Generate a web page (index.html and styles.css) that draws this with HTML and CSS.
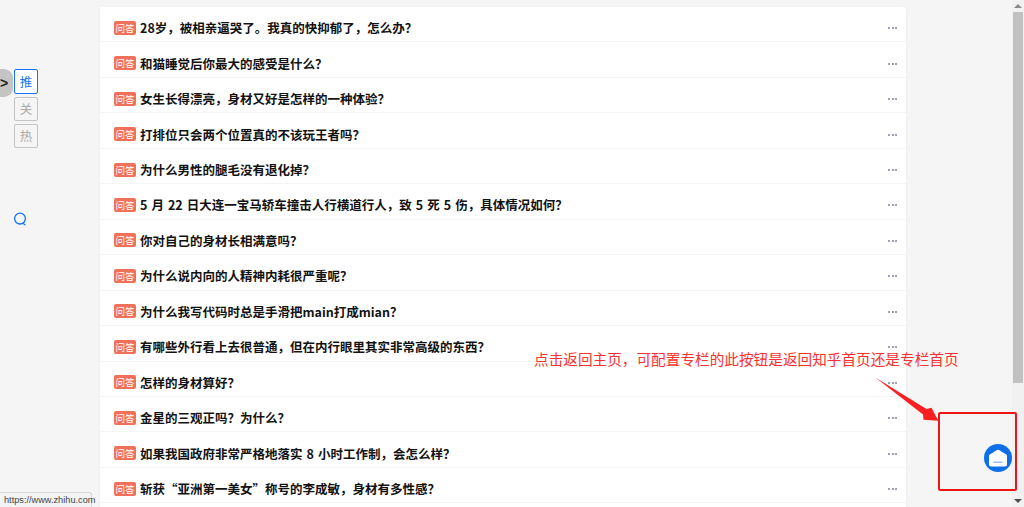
FILE: index.html
```html
<!DOCTYPE html>
<html lang="zh-CN">
<head>
  <meta charset="UTF-8">
  <title>知乎</title>
  <link rel="stylesheet" href="styles.css">
</head>
<body>
  <div class="page">
    <aside class="rail">
      <div class="rail-top">
        <div class="toggle">&gt;</div>
        <div class="tabs">
          <div class="tab active">推</div>
          <div class="tab">关</div>
          <div class="tab">热</div>
        </div>
      </div>
      <svg class="search" width="14" height="14" viewBox="0 0 14 14" fill="none" stroke="#1772f6" stroke-width="1.3">
        <circle cx="7" cy="6.6" r="5.4"/>
        <path d="M9.8 11.2l2.2 1.6" stroke-linecap="round"/>
      </svg>
    </aside>

    <main class="list">
      <div class="row"><span class="tag">问答</span><a class="title">28岁，被相亲逼哭了。我真的快抑郁了，怎么办？</a><span class="more"><i></i><i></i><i></i></span></div>
      <div class="row"><span class="tag">问答</span><a class="title">和猫睡觉后你最大的感受是什么？</a><span class="more"><i></i><i></i><i></i></span></div>
      <div class="row"><span class="tag">问答</span><a class="title">女生长得漂亮，身材又好是怎样的一种体验？</a><span class="more"><i></i><i></i><i></i></span></div>
      <div class="row"><span class="tag">问答</span><a class="title">打排位只会两个位置真的不该玩王者吗？</a><span class="more"><i></i><i></i><i></i></span></div>
      <div class="row"><span class="tag">问答</span><a class="title">为什么男性的腿毛没有退化掉？</a><span class="more"><i></i><i></i><i></i></span></div>
      <div class="row"><span class="tag">问答</span><a class="title">5 月 22 日大连一宝马轿车撞击人行横道行人，致 5 死 5 伤，具体情况如何？</a><span class="more"><i></i><i></i><i></i></span></div>
      <div class="row"><span class="tag">问答</span><a class="title">你对自己的身材长相满意吗？</a><span class="more"><i></i><i></i><i></i></span></div>
      <div class="row"><span class="tag">问答</span><a class="title">为什么说内向的人精神内耗很严重呢？</a><span class="more"><i></i><i></i><i></i></span></div>
      <div class="row"><span class="tag">问答</span><a class="title">为什么我写代码时总是手滑把main打成mian？</a><span class="more"><i></i><i></i><i></i></span></div>
      <div class="row"><span class="tag">问答</span><a class="title">有哪些外行看上去很普通，但在内行眼里其实非常高级的东西？</a><span class="more"><i></i><i></i><i></i></span></div>
      <div class="row"><span class="tag">问答</span><a class="title">怎样的身材算好？</a><span class="more"><i></i><i></i><i></i></span></div>
      <div class="row"><span class="tag">问答</span><a class="title">金星的三观正吗？为什么？</a><span class="more"><i></i><i></i><i></i></span></div>
      <div class="row"><span class="tag">问答</span><a class="title">如果我国政府非常严格地落实 8 小时工作制，会怎么样？</a><span class="more"><i></i><i></i><i></i></span></div>
      <div class="row"><span class="tag">问答</span><a class="title">斩获“亚洲第一美女”称号的李成敏，身材有多性感？</a><span class="more"><i></i><i></i><i></i></span></div>
    </main>

    <div class="scrollbar">
      <span class="arrow up"></span>
      <div class="track"><div class="thumb"></div></div>
      <span class="arrow down"></span>
    </div>
  </div>

  <!-- annotation layer on top of the screenshot -->
  <div class="note">点击返回主页，可配置专栏的此按钮是返回知乎首页还是专栏首页</div>
  <svg class="pointer" width="66" height="46" viewBox="0 0 66 46">
    <path d="M.7 .7L51.500 32L56.500 30.800L63.300 43.700L48.500 42.800L48 37.500Z" fill="#fb1f1f"/>
  </svg>
  <div class="frame"></div>
  <div class="home">
    <svg width="20" height="18" viewBox="0 0 20 18">
      <path d="M1 6.800Q1 6 1.800 5.500L9 1Q10 .4 11 1L18.200 5.500Q19 6 19 6.800V15.500Q19 17.500 17 17.500H3Q1 17.500 1 15.500Z" fill="#fff"/>
      <path d="M5.500 13.200H14.500" stroke="#8ab8fb" stroke-width="1.400"/>
    </svg>
  </div>
  <div class="status">https://www.zhihu.com</div>
</body>
</html>
```

FILE: styles.css
```css
* {
  box-sizing: border-box;
}

html, body {
  height: 100%;
  margin: 0;
  overflow: hidden;
}

body {
  background: #f5f5f5;
  font-family: "Noto Sans CJK SC", "Liberation Sans", sans-serif;
}

.page {
  display: flex;
  height: 507px;
}

/* left rail */
.rail {
  width: 100px;
  flex: none;
  padding-top: 69px;
}

.rail-top {
  display: flex;
  gap: 1px;
  align-items: flex-start;
}

.toggle {
  width: 13px;
  height: 28px;
  background: #c4c4c4;
  border-radius: 0 9px 9px 0;
  font-family: "Liberation Sans", sans-serif;
  font-size: 14px;
  font-weight: bold;
  line-height: 28px;
  color: #222;
}

.tabs {
  display: flex;
  flex-direction: column;
  gap: 3px;
}

.tab {
  width: 24px;
  height: 24px;
  border: 1px solid #c4c4c4;
  border-radius: 2px;
  font-size: 12.500px;
  line-height: 22px;
  text-align: center;
  color: #a9a9a9;
}

.tab.active {
  height: 25px;
  line-height: 23px;
  border-color: #1772f6;
  background: #fff;
  color: #1772f6;
}

.search {
  display: block;
  margin: 64px 0 0 13px;
}

/* question list */
.list {
  width: 806px;
  flex: none;
  height: 500px;
  margin-top: 7px;
  background: #fff;
  border-radius: 2px 2px 0 0;
  box-shadow: 0 1px 3px rgba(18, 18, 18, 0.06);
}

.row {
  display: flex;
  align-items: center;
  height: 35.460px;
  padding: 6px 9px 0 14px;
  border-bottom: 1px solid #f4f4f4;
}

.tag {
  flex: none;
  width: 22px;
  height: 14px;
  margin-top: 1px;
  margin-right: 4px;
  background: #f1705a;
  border-radius: 2px;
  font-size: 9.500px;
  line-height: 14px;
  text-align: center;
  color: #fff;
}

.title {
  flex: 1;
  margin-top: 2px;
  font-size: 12.500px;
  font-weight: bold;
  line-height: 18px;
  word-spacing: 1.200px;
  white-space: nowrap;
  color: #121212;
}

.more {
  display: flex;
  gap: 1.500px;
  margin-top: 2px;
}

.more i {
  width: 2px;
  height: 2px;
  background: #9aa3b5;
}

/* browser scrollbar */
.scrollbar {
  width: 12px;
  margin-left: auto;
  display: flex;
  flex-direction: column;
  align-items: center;
  background: #f1f1f1;
  padding: 4px 0;
}

.arrow {
  flex: none;
  width: 0;
  height: 0;
  border-left: 4px solid transparent;
  border-right: 4px solid transparent;
}

.arrow.up {
  border-bottom: 4px solid #8a8a8a;
}

.arrow.down {
  border-top: 4px solid #505050;
}

.track {
  flex: 1;
  align-self: stretch;
  padding: 4px 1px 0 1px;
}

.thumb {
  height: 371px;
  background: #c1c1c1;
}

/* things lying over the page */
.note {
  position: absolute;
  left: 534px;
  top: 349px;
  font-family: "Noto Sans CJK SC", sans-serif;
  font-size: 14.650px;
  line-height: 20px;
  white-space: nowrap;
  color: #fb3030;
}

.pointer {
  position: absolute;
  left: 875px;
  top: 377px;
}

.frame {
  position: absolute;
  left: 938px;
  top: 412px;
  width: 79px;
  height: 79px;
  border: 2px solid #f01414;
  border-radius: 2px;
}

.home {
  position: absolute;
  left: 984px;
  top: 444px;
  width: 28px;
  height: 28px;
  border-radius: 50%;
  background: #0f6fe8;
  display: flex;
  align-items: center;
  justify-content: center;
}

.status {
  position: absolute;
  left: 0;
  bottom: 0;
  width: 92px;
  height: 15px;
  padding-left: 4px;
  background: #f1f3f4;
  border: 1px solid #d8d8d8;
  border-width: 1px 1px 0 0;
  border-radius: 0 3px 0 0;
  font-family: "Liberation Sans", sans-serif;
  font-size: 9.200px;
  line-height: 14px;
  white-space: nowrap;
  color: #444;
}
```
